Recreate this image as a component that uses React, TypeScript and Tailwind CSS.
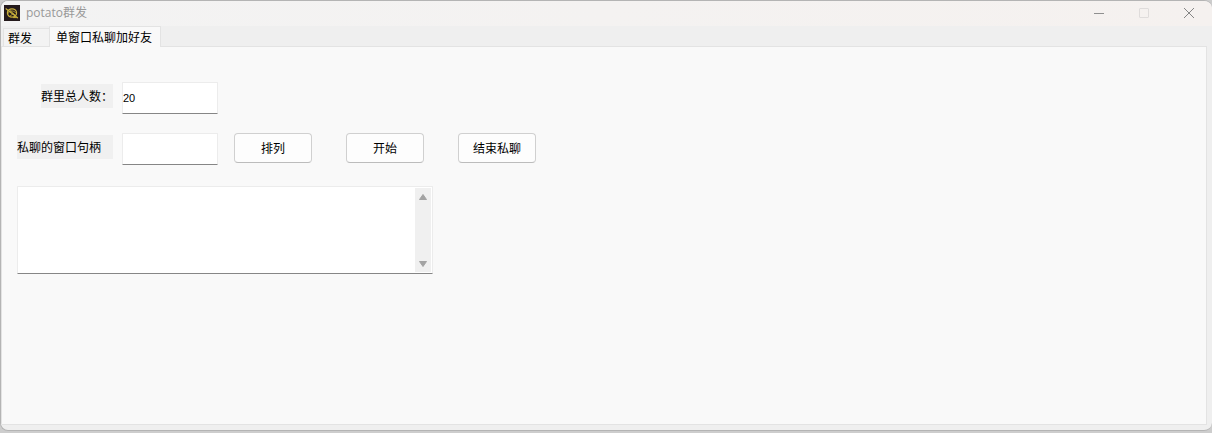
import clsx from 'clsx';
import { useState } from 'react';

const TABS = ['群发', '单窗口私聊加好友'];
const ACTIONS = ['排列', '开始', '结束私聊'];

function AppIcon() {
  return (
    <svg viewBox="0 0 16 16" className="h-4 w-4 shrink-0" aria-hidden>
      <rect width="16" height="16" fill="#241a1c" />
      <g fill="none" stroke="#c9b03a" strokeLinecap="round">
        <ellipse cx="8" cy="8" rx="4.6" ry="4.2" strokeWidth="1.2" />
        <path d="M2 3.8 13.6 12.8" strokeWidth="1.1" />
        <path d="M4 8.5C5 5.5 9 5 11.5 7.5M6 5.5 11 10M5.5 11.5 9 8.8" strokeWidth="0.8" />
        <path d="M9.5 12.6h3" strokeWidth="1" />
      </g>
    </svg>
  );
}

function TitleBar() {
  return (
    <header className="flex h-[25px] shrink-0 items-center bg-linear-to-r from-[#f3f3f3] to-[#f5f1ef] pr-px pb-px pl-[3px]">
      <AppIcon />
      <h1 className="ml-1.5 text-[12px] leading-4 text-[#999999]">potato群发</h1>
      <div className="ml-auto flex h-full items-center">
        <button type="button" aria-label="最小化" className="flex h-full w-[45px] items-center justify-center">
          <svg viewBox="0 0 10 10" className="h-2.5 w-2.5" aria-hidden>
            <path d="M0 5.5h10" stroke="#8f8f8f" />
          </svg>
        </button>
        <button
          type="button"
          aria-label="最大化"
          disabled
          className="flex h-full w-[45px] items-center justify-center"
        >
          <svg viewBox="0 0 10 10" className="h-2.5 w-2.5" aria-hidden>
            <rect x="0.5" y="0.5" width="9" height="9" rx="0.5" fill="none" stroke="#dfdcdb" />
          </svg>
        </button>
        <button type="button" aria-label="关闭" className="flex h-full w-[45px] items-center justify-center">
          <svg viewBox="0 0 10 10" className="h-2.5 w-2.5" aria-hidden>
            <path d="M0 0 10 10M10 0 0 10" stroke="#858585" />
          </svg>
        </button>
      </div>
    </header>
  );
}

function ScrollArrow({ down = false }: { down?: boolean }) {
  return (
    <button
      type="button"
      aria-label={down ? '向下滚动' : '向上滚动'}
      className="flex h-[17px] w-full items-center justify-center"
    >
      <svg viewBox="0 0 8 6" className={clsx('h-1.5 w-2', down && 'rotate-180')} aria-hidden>
        <path d="M4 0.5 7.5 5.5h-7z" fill="#a3a3a3" stroke="#a3a3a3" strokeLinejoin="round" />
      </svg>
    </button>
  );
}

const fieldClass =
  "rounded-[1px] border border-[#ececec] border-b-[#868686] bg-white font-['Liberation_Sans','Noto_Sans_CJK_SC',sans-serif] text-[11px] text-black outline-none";

export default function App() {
  const [activeTab, setActiveTab] = useState(1);
  const [total, setTotal] = useState('20');
  const [handle, setHandle] = useState('');
  const [log, setLog] = useState('');

  return (
    <div className="flex h-screen flex-col bg-[#cdcdcd] pb-0.5 font-['Open_Sans','Noto_Sans_CJK_SC',sans-serif]">
      <div className="flex min-h-0 flex-1 flex-col overflow-hidden rounded-lg border border-r-0 border-[#b4b4b4] bg-[#efefef]">
        <TitleBar />

        <div className="flex min-h-0 flex-1 flex-col pr-[5px] pb-[5px] font-['Noto_Sans_CJK_SC',sans-serif] text-[12px] text-black">
          <div role="tablist" className="flex h-5 shrink-0 items-end pl-0.5">
            {TABS.map((name, i) => (
              <button
                key={name}
                type="button"
                role="tab"
                aria-selected={i === activeTab}
                onClick={() => setActiveTab(i)}
                className={clsx(
                  'flex items-center border-[#e3e3e3] leading-4',
                  i === activeTab
                    ? 'relative -mb-px h-[21px] w-[112px] border border-b-0 bg-[#f9f9f9] pl-1.5'
                    : 'h-[18px] w-[46px] border-t border-l bg-[#f3f3f3] pl-1',
                )}
              >
                {name}
              </button>
            ))}
          </div>

          <main className="min-h-0 flex-1 border border-[#e3e3e3] bg-[#f9f9f9] px-[15px] pt-[35px]">
            <form onSubmit={(e) => e.preventDefault()}>
              <div className="grid grid-cols-[96px_96px_auto] items-start justify-start gap-x-[9px] gap-y-[19px]">
                <label
                  htmlFor="total"
                  className="mt-0.5 h-6 w-[72px] justify-self-end bg-[#f0f0f0] leading-6 whitespace-nowrap"
                >
                  群里总人数：
                </label>
                <input
                  id="total"
                  value={total}
                  onChange={(e) => setTotal(e.target.value)}
                  className={clsx(fieldClass, 'h-8 w-full')}
                />
                <span />

                <label htmlFor="handle" className="mt-0.5 h-6 bg-[#f0f0f0] leading-6 whitespace-nowrap">
                  私聊的窗口句柄
                </label>
                <input
                  id="handle"
                  value={handle}
                  onChange={(e) => setHandle(e.target.value)}
                  className={clsx(fieldClass, 'h-8 w-full')}
                />
                <div className="flex gap-[34px] pl-[7px]">
                  {ACTIONS.map((name) => (
                    <button
                      key={name}
                      type="button"
                      className="h-[30px] w-[78px] rounded-[4px] border border-[#d0d0d0] border-b-[#bcbcbc] bg-[#fdfdfd] leading-4"
                    >
                      {name}
                    </button>
                  ))}
                </div>
              </div>

              <div className={clsx(fieldClass, 'mt-[21px] flex h-[88px] max-w-[416px] p-px')}>
                <textarea
                  aria-label="日志"
                  value={log}
                  onChange={(e) => setLog(e.target.value)}
                  className="min-w-0 flex-1 resize-none bg-white outline-none"
                />
                <div className="flex w-4 shrink-0 flex-col justify-between bg-[#f0f0f0]">
                  <ScrollArrow />
                  <ScrollArrow down />
                </div>
              </div>
            </form>
          </main>
        </div>
      </div>
    </div>
  );
}
